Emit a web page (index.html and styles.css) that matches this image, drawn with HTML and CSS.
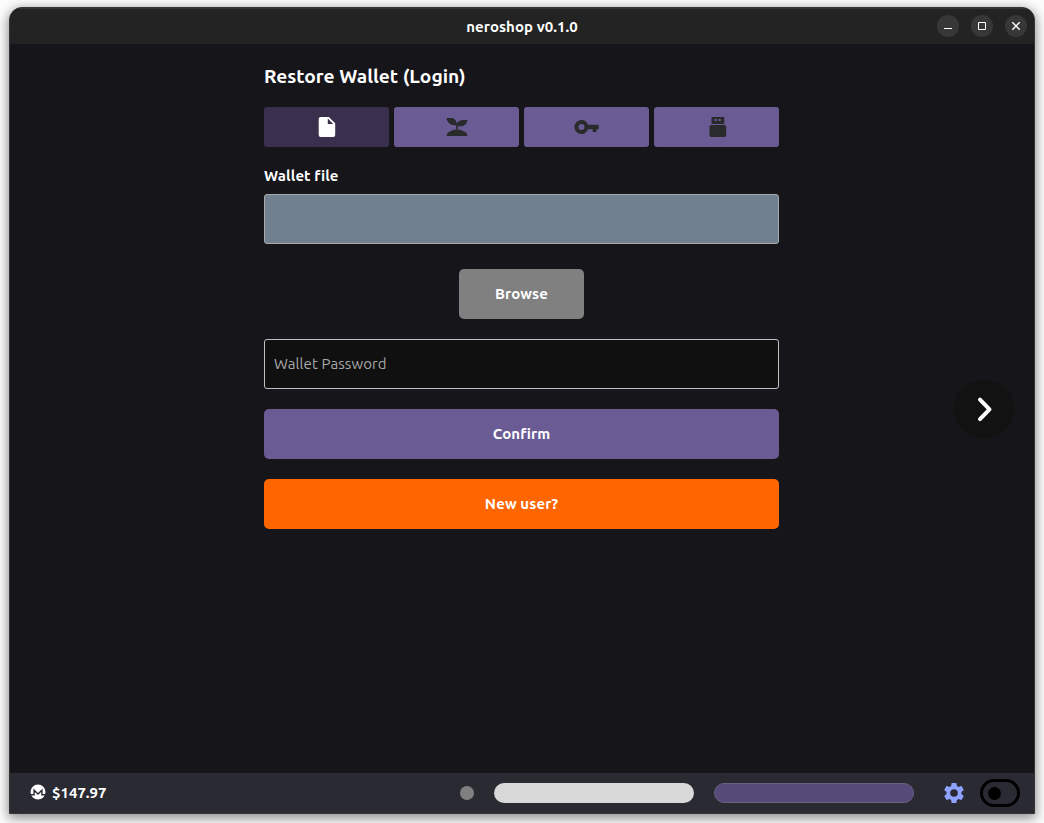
FILE: index.html
```html
<!DOCTYPE html>
<html lang="en">
<head>
<meta charset="utf-8">
<title>neroshop v0.1.0</title>
<link rel="stylesheet" href="styles.css">
</head>
<body>
<div class="window">
  <header class="titlebar">
    <span class="title">neroshop v0.1.0</span>
    <div class="controls">
      <button class="control" aria-label="Minimize"><svg width="22" height="22"><path d="M7 13.5h8" stroke="#fff" fill="none"/></svg></button>
      <button class="control" aria-label="Maximize"><svg width="22" height="22"><path d="M7.5 7.5h7v7h-7z" stroke="#fff" fill="none"/></svg></button>
      <button class="control" aria-label="Close"><svg width="22" height="22"><path d="M7.3 7.3l7.4 7.4M14.7 7.3l-7.4 7.4" stroke="#fff" stroke-width="1.4" fill="none"/></svg></button>
    </div>
  </header>
  <main class="content">
    <section class="form">
      <h1 class="heading">Restore Wallet (Login)</h1>
      <div class="tabs">
        <button class="tab active" aria-label="File"><svg width="24" height="24" viewBox="0 0 24 24"><path fill="#fff" d="M5.700 2H13.800L20.200 8.200V20a2 2 0 0 1-2 2H5.700a2 2 0 0 1-2-2V4a2 2 0 0 1 2-2zM12.800 3.600V9h5.400z"/></svg></button>
        <button class="tab" aria-label="Seed"><svg width="24" height="24" viewBox="0 0 24 24"><path class="ink" d="M1.500 3H6C9.500 3 11.500 5.500 11.800 8.500C13 6.200 15.500 5 18.500 5H22.500C21.700 9 19.500 11.300 15.500 11.300H12.800V15C15 14.500 17 15.200 18 16.200C20.500 16.500 22.300 18.500 22.500 21H1.500C1.700 18.500 3.500 16.500 6 16.200C7.500 15 9.500 14.500 11.200 15V10.200H9.500C5 10.200 2.300 7.500 1.500 3z"/></svg></button>
        <button class="tab" aria-label="Keys"><svg width="24" height="24" viewBox="0 0 24 24"><path class="ink" fill-rule="evenodd" d="M6.500 5a7 7 0 1 0 6.500 9.300H17.700V17h3.800v-2.700H23.700V9.700H13A7 7 0 0 0 6.500 5zM6.500 9a3 3 0 1 1 0 6a3 3 0 0 1 0-6z"/></svg></button>
        <button class="tab" aria-label="Hardware wallet"><svg width="24" height="24" viewBox="0 0 24 24"><path class="ink" fill-rule="evenodd" d="M6.500 2H19.300V9H6.500zM9.500 4V6H11.700V4zM13.500 4V6H15.800V4zM6.500 10H19.200a2 2 0 0 1 2 2V20a2 2 0 0 1-2 2H6.500a2 2 0 0 1-2-2V12a2 2 0 0 1 2-2z"/></svg></button>
      </div>
      <div class="label">Wallet file</div>
      <div class="file-field"></div>
      <button class="button browse">Browse</button>
      <input class="password" type="password" placeholder="Wallet Password">
      <button class="button confirm">Confirm</button>
      <button class="button new-user">New user?</button>
    </section>
    <button class="next" aria-label="Next"><svg width="60" height="60"><path d="M26 20.700l9.500 9.700L26 40.100" fill="none" stroke="#fff" stroke-width="4" stroke-linecap="round" stroke-linejoin="round"/></svg></button>
  </main>
  <footer class="statusbar">
    <svg class="coin" width="16" height="16" viewBox="0 0 16 16"><circle cx="8" cy="8" r="7.500" fill="#fff"/><path d="M0 10.800H4.100V6.200L8 10L11.900 6.200V10.800H16" fill="none" stroke="#2a2a33" stroke-width="1.400"/></svg>
    <span class="price">$147.97</span>
    <div class="status">
      <span class="dot"></span>
      <span class="pill light"></span>
      <span class="pill violet"></span>
      <svg class="gear" width="24" height="24" viewBox="0 0 24 24"><path fill="#8fa2ff" d="M19.430 12.980c.04-.32.07-.64.07-.98s-.03-.66-.07-.98l2.110-1.650c.19-.15.24-.42.12-.64l-2-3.460c-.12-.22-.39-.3-.61-.22l-2.490 1c-.52-.4-1.080-.73-1.690-.98l-.38-2.650A.49.49 0 0 0 14 2h-4c-.25 0-.46.18-.49.42l-.38 2.650c-.61.25-1.170.59-1.690.98l-2.490-1c-.23-.09-.49 0-.61.22l-2 3.460c-.13.22-.07.49.12.64l2.110 1.650c-.04.32-.07.65-.07.98s.03.66.07.98l-2.110 1.650c-.19.15-.24.42-.12.64l2 3.460c.12.22.39.3.61.22l2.490-1c.52.4 1.080.73 1.690.98l.38 2.650c.03.24.24.42.49.42h4c.25 0 .46-.18.49-.42l.38-2.650c.61-.25 1.170-.59 1.690-.98l2.490 1c.23.09.49 0 .61-.22l2-3.460c.12-.22.07-.49-.12-.64zM12 15.800a3.800 3.800 0 1 1 0-7.600a3.800 3.800 0 0 1 0 7.600z"/></svg>
      <span class="toggle"><span class="knob"></span></span>
    </div>
  </footer>
</div>
</body>
</html>
```
FILE: styles.css
```css
* { box-sizing: border-box; }
body {
  margin: 0;
  height: 823px;
  padding: 7px 9px 9px;
  overflow: hidden;
  background: #fcfcfc;
  font-family: Ubuntu, "Noto Sans", sans-serif;
  color: #fff;
}
button { border: 0; padding: 0; font: inherit; color: inherit; }
svg { display: block; overflow: visible; }
.window {
  display: flex;
  flex-direction: column;
  width: 1026px;
  height: 807px;
  border: 1px solid #353535;
  border-radius: 13px 13px 0 0;
  background: #16151a;
  box-shadow: 0 3px 12px 1px rgba(0, 0, 0, .46);
  overflow: hidden;
}
.titlebar {
  display: grid;
  grid-template-columns: 1fr auto 1fr;
  align-items: center;
  flex: none;
  height: 36px;
  padding-bottom: 1px;
  border-top: 1px solid #353535;
  background: #232323;
}
.title {
  grid-column: 2;
  padding-top: 2px;
  font-size: 15px;
  font-weight: 700;
  line-height: 20px;
  letter-spacing: .05px;
}
.controls { display: flex; justify-content: flex-end; gap: 12px; padding-right: 7px; }
.control { width: 22px; height: 22px; border-radius: 50%; background: #373737; }
.content { position: relative; flex: 1; }
.form { display: flex; flex-direction: column; width: 515px; margin-left: 254px; padding-top: 20px; }
.heading { margin: 0 0 19px; font-size: 19.200px; line-height: 24px; white-space: nowrap; }
.tabs { display: flex; gap: 5px; }
.tab {
  display: flex;
  align-items: center;
  justify-content: center;
  width: 125px;
  height: 40px;
  border-radius: 3px;
  background: #6b5b95;
}
.tab.active { background: #3a304e; }
.ink { fill: #282a2b; }
.label { margin: 19px 0 8px; font-size: 15px; font-weight: 700; line-height: 20px; letter-spacing: .1px; }
.file-field { height: 50px; border: 1px solid #a9a9a9; border-radius: 3px; background: #708090; }
.button { height: 50px; padding-bottom: 1px; border-radius: 5px; font-size: 15px; font-weight: 700; letter-spacing: .1px; }
.browse { align-self: center; width: 125px; margin: 25px 0 20px; background: #808080; }
.password {
  height: 50px;
  padding: 0 9px 1px;
  border: 1px solid #c0c0c0;
  border-radius: 3px;
  background: #101010;
  font: 15px Ubuntu, "Noto Sans", sans-serif;
  letter-spacing: .1px;
}
.password::placeholder { color: #a9a9a9; opacity: 1; }
.confirm { margin: 20px 0; background: #6b5b95; }
.new-user { background: #ff6600; }
.next {
  position: absolute;
  top: 335px;
  right: 20px;
  width: 60px;
  height: 60px;
  border-radius: 50%;
  background: #121212;
}
.statusbar {
  display: flex;
  align-items: center;
  flex: none;
  height: 40px;
  padding: 0 14px 0 20px;
  background: #2a2a33;
}
.coin { margin: -2px 6px 0 0; }
.price { font-size: 15px; font-weight: 700; line-height: 20px; }
.status { display: flex; align-items: center; margin-left: auto; }
.dot { width: 14px; height: 14px; margin-right: 20px; border-radius: 50%; background: #808080; }
.pill { width: 200px; height: 20px; margin-right: 20px; border-radius: 10px; }
.light { background: #d9d9d9; }
.violet { margin-right: 28px; border: 1px solid #6a6080; background: #564a78; }
.gear { margin-right: 14px; }
.toggle {
  display: flex;
  align-items: center;
  width: 40px;
  height: 28px;
  padding-left: 5px;
  border: 3px solid #000;
  border-radius: 14px;
}
.knob { width: 13px; height: 13px; border-radius: 50%; background: #000; }
```
